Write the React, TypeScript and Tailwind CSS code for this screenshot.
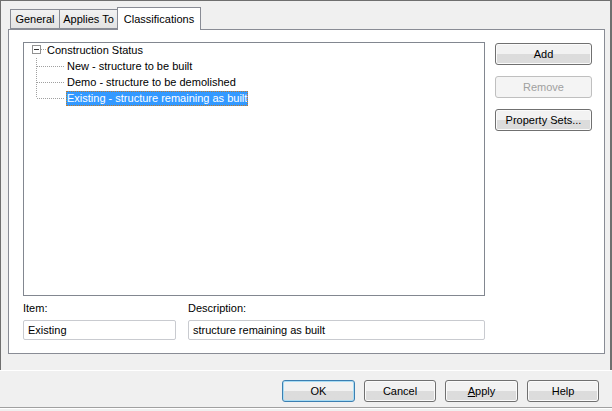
import React from 'react';

const font = { fontFamily: '"Liberation Sans", Arial, sans-serif' };

function WinButton({
  label,
  disabled,
  isDefault,
  className = '',
}: {
  label: React.ReactNode;
  disabled?: boolean;
  isDefault?: boolean;
  className?: string;
}) {
  const border = disabled
    ? 'border-[#bfbfbf] text-[#a0a0a0] bg-[#f4f4f4]'
    : isDefault
      ? 'border-[#3c7fb1] text-black bg-gradient-to-b from-[#f2f2f2] from-50% to-[#dcdcdc] to-50% shadow-[inset_0_0_0_1px_#a8dcf4]'
      : 'border-[#707070] text-black bg-gradient-to-b from-[#f2f2f2] from-50% to-[#dcdcdc] to-50% shadow-[inset_0_0_0_1px_#fbfbfb]';
  return (
    <div
      className={`flex items-center justify-center rounded-[3px] border text-[11px] ${border} ${className}`}
    >
      {label}
    </div>
  );
}

function Connector({ last }: { last?: boolean }) {
  return (
    <svg width="42" height="16" className="shrink-0">
      <line
        x1="12.5"
        y1="0"
        x2="12.5"
        y2={last ? 8 : 16}
        stroke="#a0a0a0"
        strokeDasharray="1 1"
      />
      <line x1="13" y1="8.5" x2="41" y2="8.5" stroke="#a0a0a0" strokeDasharray="1 1" />
    </svg>
  );
}

export default function App() {
  const children = [
    'New - structure to be built',
    'Demo - structure to be demolished',
    'Existing - structure remaining as built',
  ];

  return (
    <div className="w-[612px] h-[411px] bg-[#f0f0f0] flex flex-col overflow-hidden" style={font}>
      {/* Upper area */}
      <div className="h-[370px] border-t border-l border-r-2 border-[#6f6f6f] flex flex-col">
        {/* Tabs */}
        <div className="flex items-end h-[29px] pl-[9px] pt-[7px] relative z-10 -mb-px">
          <div className="h-[20px] w-[49px] border border-[#898c95] border-r-0 bg-gradient-to-b from-[#f2f2f2] to-[#e3e3e3] flex items-center justify-center text-[11px] text-black mb-px">
            General
          </div>
          <div className="h-[20px] w-[59px] border border-[#898c95] bg-gradient-to-b from-[#f2f2f2] to-[#e3e3e3] flex items-center justify-center text-[11px] text-black mb-px">
            Applies To
          </div>
          <div className="h-[23px] w-[84px] border border-[#898c95] border-b-0 bg-white flex items-start pt-[3px] justify-center text-[11px] text-black -ml-px">
            Classifications
          </div>
        </div>

        {/* Tab page */}
        <div className="ml-[7px] w-[597px] h-[325px] border border-[#898c95] bg-white flex pt-[12px] pl-[14px]">
          <div className="flex flex-col w-[462px]">
            {/* Tree */}
            <div className="h-[254px] border border-[#828790] bg-white text-[11px] text-black">
              <div className="-mt-px">
                <div className="flex items-center h-4">
                  <svg width="23" height="16" className="shrink-0">
                    <rect x="8.5" y="3.5" width="8" height="8" fill="white" stroke="#919191" />
                    <line x1="10" y1="7.5" x2="15" y2="7.5" stroke="#333" />
                    <line x1="17" y1="7.5" x2="23" y2="7.5" stroke="#a0a0a0" strokeDasharray="1 1" />
                  </svg>
                  <span className="leading-4">Construction Status</span>
                </div>
                {children.map((c, i) => (
                  <div key={c} className="flex items-center h-4">
                    <Connector last={i === children.length - 1} />
                    {i === children.length - 1 ? (
                      <span className="leading-[15px] px-px bg-[#3399ff] text-white outline outline-1 outline-dotted outline-[#c07a2a] -outline-offset-1">
                        {c}
                      </span>
                    ) : (
                      <span className="leading-4 px-px">{c}</span>
                    )}
                  </div>
                ))}
              </div>
            </div>

            {/* Item / Description */}
            <div className="flex mt-[5px] gap-[12px]">
              <div className="flex flex-col w-[153px]">
                <span className="text-[11px] text-black leading-[14px]">Item:</span>
                <div className="mt-[5px] h-[20px] border border-[#c9cbd0] rounded-[2px] flex items-center px-[4px] text-[11px] text-black">
                  Existing
                </div>
              </div>
              <div className="flex flex-col w-[297px]">
                <span className="text-[11px] text-black leading-[14px]">Description:</span>
                <div className="mt-[5px] h-[20px] border border-[#c9cbd0] rounded-[2px] flex items-center px-[4px] text-[11px] text-black">
                  structure remaining as built
                </div>
              </div>
            </div>
          </div>

          {/* Side buttons */}
          <div className="flex flex-col ml-[10px] gap-[11px] pt-px">
            <WinButton label="Add" className="w-[97px] h-[22px]" />
            <WinButton label="Remove" disabled className="w-[97px] h-[22px]" />
            <WinButton label="Property Sets..." className="w-[97px] h-[22px]" />
          </div>
        </div>
      </div>

      {/* Bottom bar */}
      <div className="flex-1 border-t border-white flex flex-col">
        <div className="flex justify-end gap-[9px] pt-[9px] pr-[13px] h-[36px]">
          <WinButton label="OK" isDefault className="w-[73px] h-[22px]" />
          <WinButton label="Cancel" className="w-[72px] h-[22px]" />
          <WinButton
            label={
              <span>
                <span className="underline">A</span>pply
              </span>
            }
            className="w-[73px] h-[22px]"
          />
          <WinButton label="Help" className="w-[72px] h-[22px]" />
        </div>
        <div className="border-t border-[#a0a0a0] border-b border-b-white" />
      </div>
    </div>
  );
}
